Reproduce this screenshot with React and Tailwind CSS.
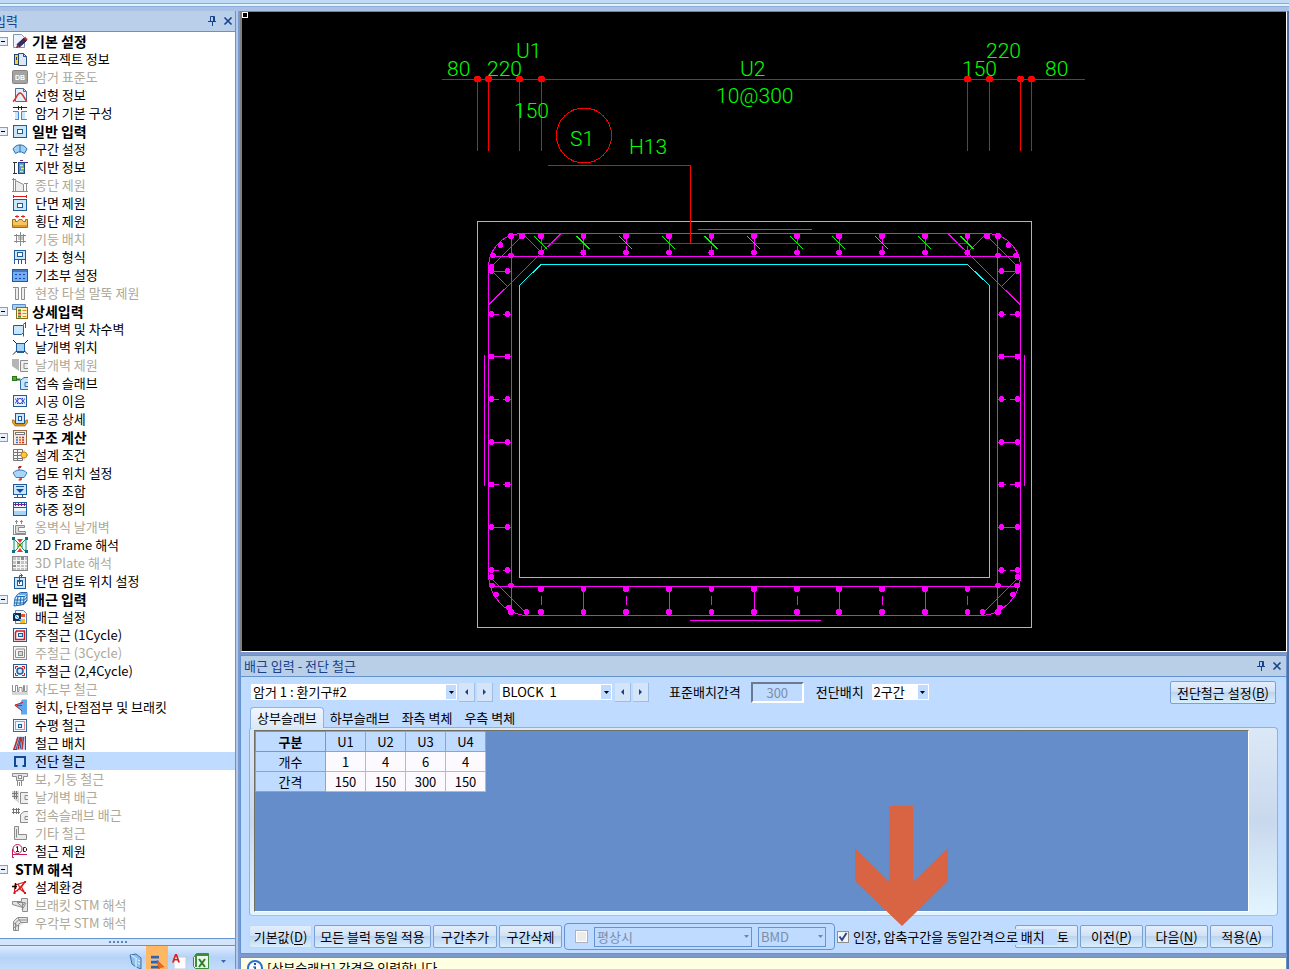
import { useState } from "react";

const BLUE = "#1f5c9c";
const SKY = "#c9e6fb";
const GRAY = "#8c8c8c";
const PALE = "#d6d6d6";

// 16x16 tree icons
const icons = {
  edit: (
    <>
      <path d="M1.500 1.500h8l3 3v10h-11z" fill="#eef3fb" stroke="#7d95b8" />
      <path d="M12 5l2.500 2.500-7 6.500-2.500-2.500z" fill="#3a2a6a" stroke="#2b1d45" />
      <path d="M12.500 4.500l2.500 2.500" stroke="#c0392b" strokeWidth="2" />
      <path d="M5 12l2 2-3 1z" fill="#8b1a1a" />
    </>
  ),
  project: (
    <>
      <path d="M6.500 2.500h5l3 3v9h-8z" fill="#dbe8f8" stroke="#31507f" />
      <path d="M11.500 2.500v3h3" fill="none" stroke="#31507f" />
      <rect x="2.500" y="3.500" width="4" height="10" fill="#ffd21f" stroke="#20406f" />
      <path d="M4.500 6v3" stroke="#20406f" />
    </>
  ),
  db: (
    <>
      <rect x="0.500" y="1.500" width="15" height="13" rx="1" fill="#a3a3a3" stroke="#858585" />
      <text x="8" y="11" textAnchor="middle" fontSize="7" fontWeight="700" fontFamily="Liberation Sans, sans-serif" fill="#fff">DB</text>
    </>
  ),
  curve: (
    <>
      <path d="M3.500 1.500h8l3 3v10h-11z" fill="#e6eefa" stroke="#4f6a94" />
      <path d="M11.500 1.500v3h3" fill="none" stroke="#4f6a94" />
      <path d="M1 14.500C4 13 5 6 8 6s4 6 7 8.500" fill="none" stroke="#d0342c" strokeWidth="1.500" />
    </>
  ),
  culvert: (
    <>
      <path d="M1 2.500h14M6.500 1v4M9.500 1v4" stroke="#222" />
      <path d="M3 7h3v8H3zM10 7h3v8h-3z" fill={SKY} />
      <path d="M1 6.500h5.500V15M15 6.500H9.500V15M3 14.500h3M15 14.500h-5" fill="none" stroke="#4b87c8" />
    </>
  ),
  box: (
    <>
      <rect x="1.500" y="2.500" width="13" height="12" fill={SKY} stroke={BLUE} />
      <rect x="5.500" y="6.500" width="5" height="4" fill="#fff" stroke={BLUE} />
    </>
  ),
  fan: (
    <>
      <path d="M1 8c3-5.500 11-5.500 14 0l-2.500 4.500-3-1.500h-3l-3 1.500z" fill="#9fd0f5" stroke="#2f6da8" />
      <path d="M8 4v7" stroke="#2f6da8" />
    </>
  ),
  ground: (
    <>
      <path d="M1 3.500h4M2.500 3.500v11M1 14.500h4" stroke="#333" />
      <rect x="6.500" y="3.500" width="6" height="11" fill="#4c95e0" stroke="#1c4a86" />
      <path d="M8 6.500h3M9 9.500h3M8 12.500h3" stroke="#ffe34d" strokeWidth="1.500" />
      <path d="M13 3.500h3M8 1.500h3" stroke="#702090" />
    </>
  ),
  profile: (
    <>
      <path d="M1.500 1v14M0 2.500h4M3.500 3.500l8 4v7h-8zM14.500 6v9M12 6.500h4M0 14.500h16" fill="#ececec" stroke={GRAY} />
    </>
  ),
  section: (
    <>
      <path d="M1 1.500h14M1.500 0v3M14.500 0v3" stroke="#e01818" />
      <rect x="1.500" y="4.500" width="13" height="11" fill={SKY} stroke={BLUE} />
      <rect x="5.500" y="8.500" width="5" height="4" fill="#fff" stroke={BLUE} />
    </>
  ),
  land: (
    <>
      <path d="M0.500 6.500h3v2h2l1.500-2h3l1.500 2h2v-2h2v8h-15z" fill="#f6c55c" stroke="#a56a12" />
      <path d="M1 12h14v2H1z" fill="#e09a28" />
      <path d="M3 3.500h4M9 3.500h4M5 2v3M11 2v3" stroke="#d22" />
    </>
  ),
  columns: (
    <path d="M2 4.500h12M2 10.500h12M4.500 3v9M8.500 1v14M11.500 3v9M6 6h5M6 8h5" stroke={GRAY} />
  ),
  footing: (
    <>
      <rect x="2.500" y="1.500" width="11" height="9" fill={SKY} stroke={BLUE} />
      <rect x="5.500" y="3.500" width="5" height="4" fill="#fff" stroke={BLUE} />
      <path d="M2.500 11v4M6.500 11v4M9.500 11v4M13.500 11v4" stroke={BLUE} />
    </>
  ),
  footingSet: (
    <>
      <rect x="0.500" y="2.500" width="15" height="12" fill="#74b0f0" stroke={BLUE} />
      <path d="M1 4h14" stroke="#12408c" />
      <path d="M3 7.500h2M7 7.500h2M11 7.500h2M3 11.500h2M7 11.500h2M11 11.500h2" stroke="#fff" strokeWidth="3" />
      <path d="M3 7.500h2M7 7.500h2M11 7.500h2M3 11.500h2M7 11.500h2M11 11.500h2" stroke="#1b40b8" strokeWidth="2" />
    </>
  ),
  piles: (
    <>
      <path d="M1 2.500h5.500v12h-3v-11M15 2.500H9.500v12h3v-11" fill="#eee" stroke={GRAY} />
    </>
  ),
  detail: (
    <>
      <path d="M0.500 1.500h13v5h-13z" fill="#a9cdf5" stroke="#5a8cc8" />
      <rect x="4.500" y="4.500" width="11" height="11" fill="#fff3b8" stroke="#8a6a1c" />
      <path d="M6 7.500h3M6 13.500h3" stroke="#2f8f2f" strokeWidth="2" />
      <path d="M10.500 7.500h4M10.500 10.500h4M10.500 13.500h4" stroke="#e08a1e" />
      <path d="M6 10.500h3" stroke="#d33" strokeWidth="2" />
    </>
  ),
  parapet: (
    <>
      <path d="M1.500 4.500h10v7l-2 2h-8z" fill={SKY} stroke={BLUE} />
      <path d="M13.500 1v6M11 3.500l3-2M11.500 11.500v4" stroke={BLUE} />
    </>
  ),
  wingPos: (
    <>
      <rect x="4.500" y="4.500" width="8" height="8" fill="#a9d6f5" stroke={BLUE} />
      <path d="M1 1l3.500 3.500M16 1l-3.500 3.500M1 15.500l3.500-3.500M16 15.500L12.500 12" stroke="#222" />
      <path d="M5 13.500h7" stroke={BLUE} />
    </>
  ),
  wing: (
    <>
      <path d="M0 2h7v12L0 9z" fill="#b5b5b5" />
      <path d="M16 3.500H8.500v11H16M16 6.500h-4v5h4" fill="#eee" stroke={GRAY} />
    </>
  ),
  approach: (
    <>
      <rect x="0.500" y="1.500" width="4" height="4" fill="#4fae2a" stroke="#2c7414" />
      <path d="M5 4.500h3.500" stroke="#2c7414" strokeWidth="2" />
      <path d="M16 2.500h-4l-3.500 3v9H16M16 7.500h-3v4h3" fill={SKY} stroke="#2f6da8" />
    </>
  ),
  joint: (
    <>
      <rect x="1.500" y="2.500" width="13" height="11" fill="#e6f3ff" stroke={BLUE} />
      <circle cx="8" cy="8" r="2.500" fill="#fff" stroke="#2233d0" />
      <path d="M3 6c2 0 2 4 0 4M13 6c-2 0-2 4 0 4M5 5l1 1M11 5l-1 1M5 11l1-1M11 11l-1-1" fill="none" stroke="#2233d0" />
    </>
  ),
  earth: (
    <>
      <path d="M0 9h2l2 4h8l2-4h2v2l-3 4H3l-3-4z" fill="#e9a42a" stroke="#9c6512" strokeWidth="0.700" />
      <rect x="3.500" y="2.500" width="9" height="10" fill={SKY} stroke={BLUE} />
      <rect x="6.500" y="5.500" width="3" height="4" fill="#fff" stroke={BLUE} />
    </>
  ),
  calc: (
    <>
      <rect x="1.500" y="1.500" width="13" height="14" fill="#fbeadb" stroke="#9a6b4a" />
      <rect x="3.500" y="3.500" width="9" height="2" fill="#fff" stroke="#777" />
      <path d="M4 8.500h2M4 11h2M4 13.500h2" stroke="#3a78d0" strokeWidth="1.500" />
      <path d="M7 8.500h2M7 11h2M7 13.500h2" stroke="#e0582a" strokeWidth="1.500" />
      <path d="M10 8.500h2M10 11h2M10 13.500h2" stroke="#c02a2a" strokeWidth="1.500" />
    </>
  ),
  condition: (
    <>
      <path d="M1.500 2.500h9v11h-9zM1.500 5.500h9M1.500 8.500h9M1.500 11.500h9M5.500 2.500v11" fill="#f7f7f7" stroke="#777" />
      <circle cx="12" cy="8" r="3" fill="#ffc83a" stroke="#c88510" />
      <path d="M12 3.500v1M12 11.500v1M7.500 8h1M15 8h1" stroke="#c88510" />
    </>
  ),
  review: (
    <>
      <path d="M1 8C4 4 12 4 15 8l-3 4.500H4z" fill="#a8d6f8" stroke="#3f7fbf" />
      <path d="M7 5V1.500h2.500M6 2.500h3M9 12v3H6.500M10 14H7" fill="none" stroke="#d81818" />
    </>
  ),
  combine: (
    <>
      <rect x="1.500" y="1.500" width="13" height="10" fill={SKY} stroke={BLUE} />
      <path d="M4 3.500h8" stroke={BLUE} />
      <path d="M4 6h8l-4 4z" fill="#1546b0" />
      <path d="M5.500 12v2M10.500 12v2M2 14.500h12" stroke={BLUE} />
    </>
  ),
  load: (
    <>
      <rect x="1.500" y="1.500" width="13" height="13" fill="#e9f5ff" stroke={BLUE} />
      <rect x="2" y="10" width="12" height="4" fill="#a5d4f8" />
      <path d="M2 3.500h12M3.500 2v3M6.500 2v3M9.500 2v3M12.500 2v3" stroke="#7a1c8a" />
      <path d="M2 6.500h12" stroke={BLUE} />
    </>
  ),
  retaining: (
    <path d="M3 2.500h3M8 2.500h3M4.500 1v4M9.500 1v4M3.500 6.500h9v2h-6v4h7v2h-10zM1.500 6v9M1 15.500h13" fill="#ddd" stroke={GRAY} />
  ),
  frame2d: (
    <>
      <path d="M2 2l4 4v5l-4 4zM14 2l-4 4v5l4 4z" fill="#e8fbf4" stroke="#108a70" />
      <path d="M5 2l3 4 3-4zM5 15l3-4 3 4z" fill="#e03a20" />
      <path d="M6 6h4v4H6z" fill="#f5c032" />
      <path d="M0 1.500h3M13 1.500h3M0 14.500h3M13 14.500h3" stroke="#0e6e86" strokeWidth="3" />
      <path d="M6 6l4 4M10 6l-4 4" stroke="#2a8f3a" />
    </>
  ),
  plate3d: (
    <>
      <rect x="0.500" y="1.500" width="15" height="14" fill="#c4c4c4" stroke={GRAY} />
      <path d="M4.500 2v13M8.500 2v13M12.500 2v13M1 5.500h14M1 9.500h14M1 12.500h14" stroke="#f5f5f5" />
      <path d="M5 6h3v3H5zM9 2h3v3H9zM1 10h3v2H1z" fill="#8f8f8f" />
    </>
  ),
  sectionPos: (
    <>
      <rect x="2.500" y="4.500" width="11" height="11" fill={SKY} stroke={BLUE} />
      <rect x="5.500" y="7.500" width="5" height="5" fill="#fff" stroke={BLUE} />
      <path d="M7.500 11V2.500h3M8.500 0.500L10.500 2.500 8.500 4.500M5.500 8.500h4" fill="none" stroke="#e01818" />
    </>
  ),
  mesh: (
    <>
      <path d="M5.500 3.500l3-2h6.500v8l-3 4-10 1.500 1-8z" fill="#d9ebfb" stroke="#1d6ab5" />
      <path d="M3 9h9.500l2.500-3M2.500 12H12l3-3M4.500 5.500h8.500l2-2M6 5l-1.500 9M9 5l-1 9M12 5l-.5 9M7 3h7" fill="none" stroke="#1d6ab5" />
    </>
  ),
  rebarSet: (
    <>
      <path d="M3.500 1.500h8l3 3v10h-11z" fill="#f2f6fc" stroke="#607fae" />
      <path d="M1 4h8v8H1z" fill="#182a50" />
      <circle cx="5" cy="8" r="2" fill="#fff" />
      <path d="M9 5h4v3H9z" fill="#e85a20" />
      <path d="M8 10h5v4H8z" fill="#f5b92c" />
      <path d="M1 4l8 8" stroke="#2e9ae0" />
    </>
  ),
  cycle1: (
    <>
      <rect x="1.500" y="1.500" width="13" height="13" fill="#eef7ff" stroke={BLUE} />
      <path d="M3.500 5.500l1-1.500h8v8.500h-9z" fill="none" stroke="#d81818" strokeWidth="1.500" />
      <rect x="6.500" y="6.500" width="4" height="3" fill={SKY} stroke={BLUE} />
    </>
  ),
  cycle3: (
    <>
      <rect x="1.500" y="1.500" width="13" height="13" fill="#f4f4f4" stroke={GRAY} />
      <path d="M3.500 5.500l1-1.500h8v8.500h-9z" fill="none" stroke={GRAY} />
      <rect x="6.500" y="6.500" width="4" height="4" fill={PALE} stroke={GRAY} />
    </>
  ),
  cycle24: (
    <>
      <rect x="1.500" y="1.500" width="13" height="13" fill="#eef7ff" stroke={BLUE} />
      <path d="M3.500 6V3.500H6M10 3.500h2.500V6M12.500 10v2.500H10M6 12.500H3.500V10" fill="none" stroke="#d81818" />
      <circle cx="8" cy="8" r="3" fill={SKY} stroke={BLUE} strokeWidth="1.500" />
      <path d="M5 5l1 1M11 5l-1 1" stroke="#d81818" />
    </>
  ),
  road: (
    <>
      <path d="M0 12.500h16" stroke={PALE} strokeWidth="3" />
      <path d="M0.500 4v6.500h3V4.500h2v6h1.500v-4h3v4h1.500v-6h1v6h2.500V4" fill="none" stroke={GRAY} />
    </>
  ),
  haunch: (
    <>
      <path d="M15 0.500v15H9V11L2 6.500 8 4l2-3.500z" fill="#5fa8ec" />
      <path d="M11 3.500L3 6l7 6M5 6.500h5" fill="none" stroke="#d81818" />
    </>
  ),
  horizontal: (
    <>
      <rect x="1.500" y="2.500" width="13" height="12" fill="#eef7ff" stroke="#2f6da8" />
      <rect x="3.500" y="4.500" width="9" height="8" fill="none" stroke="#d81818" strokeDasharray="1 1" />
      <rect x="6.500" y="7.500" width="3" height="3" fill={SKY} stroke={BLUE} />
    </>
  ),
  placing: (
    <>
      <path d="M5 1.500h9v13H1z" fill="#b9d3ee" />
      <path d="M2 14.500L6 2M6 14.500L9 2M10 14.500L11.500 2" stroke="#c22a2a" strokeWidth="1.500" />
      <path d="M4 14.500L8 2M8 14.500L10 2M13.500 15V1M1 14.500h4" stroke={BLUE} />
    </>
  ),
  shear: <path d="M2 3h12v11h-3.500v-2H12V5H4v7h1.500v2H2z" fill="#114a92" />,
  beam: (
    <>
      <path d="M0.500 2.500h15v3h-4v4h-7v-4h-4z" fill="#e4e4e4" stroke={GRAY} />
      <rect x="6.500" y="4.500" width="3" height="3" fill="#fff" stroke={GRAY} />
      <path d="M5.500 10v5M9.500 10v5M7.500 11v4" stroke={GRAY} />
    </>
  ),
  wingBar: (
    <>
      <path d="M0 2h7v12l-4-3-3-5z" fill={PALE} />
      <path d="M0 4.500h6M0 7.500h6M2.500 2v8M4.500 2v8" stroke="#777" />
      <path d="M16 3.500H8.500v11H16M16 6.500h-3v4h3" fill="#eee" stroke={GRAY} />
    </>
  ),
  approachBar: (
    <>
      <path d="M0 2.500h8M0 5.500h8M1.500 1v6M4.500 1v6M6.500 1v6" stroke="#777" />
      <path d="M16 4.500h-4l-3.500 3v8H16M16 9.500h-3v3h3" fill="#eee" stroke={GRAY} />
    </>
  ),
  etc: (
    <path d="M2.500 1.500h4v8h8v5h-12zM4.500 4v8.500" fill="#e8e8e8" stroke={GRAY} />
  ),
  spec: (
    <>
      <circle cx="5.500" cy="6" r="4.500" fill="#fff" stroke="#c2185b" />
      <path d="M0.500 6v8M0.500 11.500H15" stroke="#c2185b" />
      <path d="M4 4.500l1.500-1v5M4 8.500h3" fill="none" stroke="#222" />
      <path d="M11.500 4.500h2l1 1v2l-1 1h-2z" fill="none" stroke="#222" />
      <path d="M0 14.500h2" stroke="#2a8f3a" />
    </>
  ),
  truss: (
    <>
      <path d="M3 6l10-3-3.500 5 3 5.500-5-4-5 4zM6 5l3 6M13 3L5 12" fill="none" stroke="#d81818" strokeWidth="1.200" />
      <path d="M12 2h2v2h-2zM12 13h2v2h-2zM1.500 13h2v2h-2z" fill="#d81818" />
      <path d="M0 7.500h5M3.500 4v6" stroke="#111" strokeWidth="1.500" />
    </>
  ),
  bracketStm: (
    <path d="M15.500 1.500v13h-5v-4l-10-3v-3h9v-3zM5 5.500h8l-3 4zM10.500 6v8M14 6l-4 7" fill="#e4e4e4" stroke={GRAY} />
  ),
  cornerStm: (
    <path d="M1.500 15.500v-9l4-4h10v5h-7l-2 2v6zM3.500 15V8l3-3h9M2 8l4 3M6 3l3 4.500M1.500 13l5-3" fill="#e4e4e4" stroke={GRAY} />
  ),
};

const Icon = ({ name }) => (
  <svg viewBox="0 0 16 16" className="size-4 shrink-0" fill="none" aria-hidden="true">
    {icons[name]}
  </svg>
);

const tree = [
  {
    label: "기본 설정",
    icon: "edit",
    items: [
      ["프로젝트 정보", "project"],
      ["암거 표준도", "db", true],
      ["선형 정보", "curve"],
      ["암거 기본 구성", "culvert"],
    ],
  },
  {
    label: "일반 입력",
    icon: "box",
    items: [
      ["구간 설정", "fan"],
      ["지반 정보", "ground"],
      ["종단 제원", "profile", true],
      ["단면 제원", "section"],
      ["횡단 제원", "land"],
      ["기둥 배치", "columns", true],
      ["기초 형식", "footing"],
      ["기초부 설정", "footingSet"],
      ["현장 타설 말뚝 제원", "piles", true],
    ],
  },
  {
    label: "상세입력",
    icon: "detail",
    items: [
      ["난간벽 및 차수벽", "parapet"],
      ["날개벽 위치", "wingPos"],
      ["날개벽 제원", "wing", true],
      ["접속 슬래브", "approach"],
      ["시공 이음", "joint"],
      ["토공 상세", "earth"],
    ],
  },
  {
    label: "구조 계산",
    icon: "calc",
    items: [
      ["설계 조건", "condition"],
      ["검토 위치 설정", "review"],
      ["하중 조합", "combine"],
      ["하중 정의", "load"],
      ["옹벽식 날개벽", "retaining", true],
      ["2D Frame 해석", "frame2d"],
      ["3D Plate 해석", "plate3d", true],
      ["단면 검토 위치 설정", "sectionPos"],
    ],
  },
  {
    label: "배근 입력",
    icon: "mesh",
    items: [
      ["배근 설정", "rebarSet"],
      ["주철근 (1Cycle)", "cycle1"],
      ["주철근 (3Cycle)", "cycle3", true],
      ["주철근 (2,4Cycle)", "cycle24"],
      ["차도부 철근", "road", true],
      ["헌치, 단절점부 및 브래킷", "haunch"],
      ["수평 철근", "horizontal"],
      ["철근 배치", "placing"],
      ["전단 철근", "shear"],
      ["보, 기둥 철근", "beam", true],
      ["날개벽 배근", "wingBar", true],
      ["접속슬래브 배근", "approachBar", true],
      ["기타 철근", "etc", true],
      ["철근 제원", "spec"],
    ],
  },
  {
    label: "STM 해석",
    items: [
      ["설계환경", "truss"],
      ["브래킷 STM 해석", "bracketStm", true],
      ["우각부 STM 해석", "cornerStm", true],
    ],
  },
];

const PanelButtons = () => (
  <div className="flex gap-1.5 text-[#15428b]">
    <button aria-label="고정" className="size-2.5">
      <svg viewBox="0 0 10 10" className="size-2.5" fill="none" stroke="currentColor">
        <path d="M3.500 0.500h4v5h-4zM6.500 0.500v5M1 5.500h8M5.500 6v4" />
      </svg>
    </button>
    <button aria-label="닫기" className="size-2.5">
      <svg viewBox="0 0 10 10" className="size-2.5" fill="none" stroke="currentColor" strokeWidth="1.600">
        <path d="M1.500 1.500l7 7M8.500 1.500l-7 7" />
      </svg>
    </button>
  </div>
);

const Sidebar = () => {
  const [selected, setSelected] = useState("전단 철근");

  return (
    <aside className="flex w-59 shrink-0 flex-col overflow-hidden border-r border-[#6593cf] bg-white">
      <div className="flex h-[21px] shrink-0 items-center justify-between border-b border-[#6593cf] bg-[#b9cfea] pr-0.5 text-[#15428b]">
        <h2 className="-ml-1.5">입력</h2>
        <PanelButtons />
      </div>
      <nav className="min-h-0 flex-1 overflow-hidden">
        {tree.map((group) => (
          <div key={group.label}>
            <div className="flex h-[18px] items-center gap-1">
              <button aria-label={`${group.label} 접기`} className="flex h-[9px] w-2 items-center border border-l-0 border-[#7f9dd9] bg-[#e9f0fb]">
                <span className="ml-px h-px w-1 bg-black" />
              </button>
              {group.icon && <Icon name={group.icon} />}
              <span className={`text-sm leading-4 font-bold ${group.icon ? "" : "pl-[3px]"}`}>{group.label}</span>
            </div>
            {group.items.map(([label, icon, disabled]) => (
              <button
                key={label}
                disabled={disabled}
                onClick={() => setSelected(label)}
                className={`flex h-[18px] w-full items-center gap-[7px] pl-3 text-left leading-[18px] ${
                  selected === label ? "bg-[#bfdbff]" : ""
                } ${disabled ? "text-[#aca899]" : "text-black"}`}
              >
                <Icon name={icon} />
                {label}
              </button>
            ))}
          </div>
        ))}
      </nav>
      <div className="flex h-2 shrink-0 items-center justify-center gap-0.5 border-y border-[#6593cf] bg-[#d3e5fb]">
        {[0, 1, 2, 3, 4].map((i) => (
          <span key={i} className="size-0.5 bg-[#5b86c4]" />
        ))}
      </div>
      <div className="flex h-[23px] shrink-0 items-start justify-end overflow-hidden bg-linear-to-b from-[#dcebfd] via-[#b5d2f8] to-[#c4dcfb]">
        <button aria-label="문서" className="pt-[7px] pr-[3px]">
          <svg viewBox="0 0 16 16" className="size-4" fill="none">
            <path d="M3 2l6-1 5 4v11l-5-2-4-3z" fill="#8fc1ee" stroke="#3b6ea8" />
            <path d="M9 6v9M11 7l2 1M11 10l2 1M4 2l6 4" stroke="#eaf4ff" />
          </svg>
        </button>
        <button aria-label="입력" className="h-6 bg-[#fdb765] px-[3px] pt-[7px]">
          <svg viewBox="0 0 16 16" className="size-4" fill="none">
            <path d="M2 1.500h8M2 6.500h8M2 11.500h8" stroke="#fff" />
            <path d="M2 3h8M2 8h8M2 13h8" stroke="#2c65ae" strokeWidth="3" />
            <path d="M8 6l7 7-4 .5-1 3z" fill="#f0641e" stroke="#c8480c" strokeWidth="0.500" />
          </svg>
        </button>
        <button aria-label="도면" className="px-[3px] pt-[7px]">
          <svg viewBox="0 0 16 16" className="size-4" fill="none">
            <path d="M3 4h12v12H3z" fill="#fff" stroke="#c4ccd8" />
            <path d="M1 9.500L4 1h2l3 8.500H7L6.500 7.500h-3L3 9.500zM4 6h2L5 3z" fill="#d81e1e" />
          </svg>
        </button>
        <button aria-label="엑셀" className="px-[3px] pt-[7px]">
          <svg viewBox="0 0 16 16" className="size-4" fill="none">
            <path d="M3.500 0.500h12v15h-13l-2-2v-9z" fill="#eaf6e6" stroke="#3c8d3c" />
            <path d="M3 1v13M3 2h12" stroke="#3c8d3c" strokeWidth="2" />
            <path d="M6 6l6 8M12 6l-6 8" stroke="#2b7d2b" strokeWidth="2" />
          </svg>
        </button>
        <button aria-label="더 보기" className="px-[9px] pt-3.5">
          <svg viewBox="0 0 5 3" className="h-[3px] w-[5px]" fill="#3b66a8">
            <path d="M0 0h5L2.500 3z" />
          </svg>
        </button>
      </div>
    </aside>
  );
};

/* ---- drawing ---- */

const barX = [541, 583.5, 626, 669, 711.5, 754, 797, 839, 882, 925, 967.5];
const barY = [271, 314, 356.5, 399, 442, 484.5, 527, 570];
const cornerDots = [
  [511, 236], [522, 236], [500.5, 245], [493, 255.5], [511, 255.5], [491.5, 267],
  [491.5, 577], [492, 585.5], [511, 585.5], [496, 594.5], [509, 607.5], [511, 612], [526.5, 612],
];

const dims = [
  ["80", 447, 76], ["220", 487, 76], ["U1", 516, 58], ["150", 514, 118], ["S1", 570, 146],
  ["H13", 629, 154], ["U2", 740, 76], ["10@300", 716, 103], ["150", 962, 76], ["220", 986, 58], ["80", 1045, 76],
];

const HalfSection = () => (
  <g>
    <path d="M488.500 266C489 250 502 234 521 233.500M488.500 577C490 596 504 613 525 615.500" />
    <path d="M488.500 266V577M511.500 236V612" />
    <path d="M490 268l34-34M488.500 305l72-71M525 236l16 16M492 271l16 16M492 579l33 33" />
    <path d="M484.500 355V486" />
    {barY.map((y, i) => (
      <g key={y}>
        <path d={i % 2 ? `M491 ${y}h8M503 ${y}h8` : `M491 ${y}h20`} />
        <circle cx="491.500" cy={y} r="3" fill="#f0f" stroke="none" />
        <circle cx="507.500" cy={y} r="3" fill="#f0f" stroke="none" />
      </g>
    ))}
    {cornerDots.map(([x, y]) => (
      <circle key={`${x}-${y}`} cx={x} cy={y} r="3" fill="#f0f" stroke="none" />
    ))}
  </g>
);

const Drawing = () => (
  <svg viewBox="242 12 1044 639" className="h-full w-full" fill="none" strokeWidth="1" shapeRendering="crispEdges">
    <rect x="242.500" y="12.500" width="5" height="5" stroke="#fff" />

    {/* concrete outline */}
    <g stroke="#0ff">
      <rect x="477.500" y="221.500" width="554" height="406" />
      <path d="M541 264.500H967.500L989.500 285.500V577.500H519.500V285.500z" />
    </g>

    {/* main bars */}
    <g stroke="#f0f">
      <HalfSection />
      <g transform="translate(1509 0) scale(-1 1)">
        <HalfSection />
      </g>
      <path d="M521 233.500H988M491 256.500H1018M491 586.500H1018M525 615.500H984M698 229.500H812M690 620.500H821" />
      {barX.map((x, i) => (
        <g key={x}>
          <path d={i % 2 ? `M${x} 236V252M${x} 589V612` : `M${x} 236v7M${x} 246v6M${x} 596v9`} />
          {[236, 252.5, 589, 612].map((y) => (
            <circle key={y} cx={x} cy={y} r="3" fill="#f0f" stroke="none" />
          ))}
        </g>
      ))}
    </g>

    {/* dimension lines and leader */}
    <g stroke="#f00">
      <path d="M442 79.500H1085" />
      {[477.5, 488.5, 519.5, 541.5, 967.5, 989.5, 1020.5, 1031.5].map((x) => (
        <g key={x}>
          <path d={`M${x} 79V151`} />
          <circle cx={x} cy="79" r="3" fill="#f00" />
        </g>
      ))}
      <circle cx="584" cy="135.500" r="27.500" />
      <path d="M548 165.500H690.500V243M541 243.500H967" />
    </g>
    <g stroke="#0f0">
      {barX.map((x) => (
        <path key={x} d={`M${x - 7} 236l13 13`} />
      ))}
    </g>
    <g fill="#0f0" stroke="none" className="font-['Roboto',sans-serif] text-[21px] font-light">
      {dims.map(([text, x, y]) => (
        <text key={`${x}-${y}`} x={x} y={y}>{text}</text>
      ))}
    </g>
  </svg>
);

/* ---- lower panel ---- */

const Select = ({ label, value, disabled, className }) => (
  <div className={`relative flex ${className}`}>
    <select
      aria-label={label}
      disabled={disabled}
      className={`h-full w-full appearance-none px-0.5 leading-4 outline-none ${
        disabled ? "border border-[#6593cf] bg-[#bfdbff] text-[#7b8ea8]" : "bg-white text-black"
      }`}
    >
      <option>{value}</option>
    </select>
    <span className="pointer-events-none absolute inset-y-px right-px flex w-2.5 items-center justify-center bg-[#bfdbff]">
      <svg viewBox="0 0 5 3" className="h-[3px] w-[5px]" fill={disabled ? "#5f8ac6" : "#000"}>
        <path d="M0 0h5L2.500 3z" />
      </svg>
    </span>
  </div>
);

const Stepper = () => (
  <div className="flex gap-0.5">
    {["이전 항목", "다음 항목"].map((label, i) => (
      <button key={label} aria-label={label} className="flex h-[19px] w-4 items-center justify-center border-r border-b border-[#9dbde6] bg-[#d4e5fa]">
        <svg viewBox="0 0 3 6" className="h-1.5 w-[3px]" fill="#15428b">
          <path d={i ? "M0 0v6l3-3z" : "M3 0v6L0 3z"} />
        </svg>
      </button>
    ))}
  </div>
);

const Button = ({ children, hotkey, className = "" }) => (
  <button
    className={`h-[23px] shrink-0 rounded-xs border bg-[linear-gradient(#e3eefb_0%,#d2e2f6_45%,#bdd4f0_50%,#d8effd_100%)] leading-[21px] whitespace-nowrap text-black ${
      className.includes("border-") ? "" : "border-[#7ba0d4]"
    } ${className}`}
  >
    {children}
    {hotkey && (
      <>
        (<u className="underline-offset-2">{hotkey}</u>)
      </>
    )}
  </button>
);

const tabs = ["상부슬래브", "하부슬래브", "좌측 벽체", "우측 벽체"];
const columns = ["U1", "U2", "U3", "U4"];
const rows = [
  { name: "개수", values: [1, 4, 6, 4] },
  { name: "간격", values: [150, 150, 300, 150] },
];

const SpacingTable = () => (
  <table className="table-fixed border-collapse text-center leading-[18px]">
    <thead>
      <tr className="h-5 bg-[#bfdbff]">
        <th className="w-[70px] border border-[#7c96c2] p-0 font-bold">구분</th>
        {columns.map((c) => (
          <th key={c} className="w-10 border border-[#8fa3c8] p-0 font-normal">{c}</th>
        ))}
      </tr>
    </thead>
    <tbody>
      {rows.map((r) => (
        <tr key={r.name} className="h-5 bg-[#fdfaff]">
          <th className="border border-[#8fa3c8] bg-[#bfdbff] p-0 font-normal">{r.name}</th>
          {r.values.map((v, i) => (
            <td key={i} className="border border-[#b9b9bd] p-0">{v}</td>
          ))}
        </tr>
      ))}
    </tbody>
  </table>
);

const ShearPanel = () => {
  const [tab, setTab] = useState("상부슬래브");
  const [evenSpacing, setEvenSpacing] = useState(true);

  return (
    <section className="my-[3px] flex h-[299px] shrink-0 flex-col border border-[#6593cf] bg-[#bfdbff]">
      <div className="flex h-[21px] shrink-0 items-center justify-between border-b border-[#6593cf] bg-[#b9cfe8] pr-1 pl-[3px] text-[#15428b]">
        <h2>배근 입력 - 전단 철근</h2>
        <PanelButtons />
      </div>

      <div className="flex h-[30px] shrink-0 items-center pr-2.5 pl-2.5">
        <Select label="암거" value="암거 1 : 환기구#2" className="h-4 w-[206px]" />
        <div className="ml-0.5"><Stepper /></div>
        <Select label="블럭" value={"BLOCK\u00a0 1"} className="ml-[7px] h-4 w-28" />
        <div className="ml-[3px]"><Stepper /></div>
        <label htmlFor="std" className="ml-5">표준배치간격</label>
        <input
          id="std"
          disabled
          defaultValue="300"
          className="ml-2.5 h-[21px] w-[53px] border-2 border-t-[#6b7a90] border-r-white border-b-white border-l-[#6b7a90] bg-[#bfdbff] text-center text-[#7b8ea8]"
        />
        <span className="ml-3">전단배치</span>
        <Select label="전단배치" value="2구간" className="ml-2 h-4 w-[57px]" />
        <Button hotkey="B" className="ml-auto px-1.5">전단철근 설정</Button>
      </div>

      <div role="tablist" className="relative z-10 -mb-px flex h-[21px] shrink-0 pl-[9px]">
        {tabs.map((t) => (
          <button
            key={t}
            role="tab"
            aria-selected={tab === t}
            onClick={() => setTab(t)}
            className={`h-[21px] rounded-t px-1.5 leading-4 ${
              tab === t ? "border border-b-0 border-[#8db2e3] bg-linear-to-b from-[#eef6ff] to-[#dbe8f6]" : ""
            }`}
          >
            {t}
          </button>
        ))}
      </div>

      <div className="mr-2 ml-2 flex min-h-0 flex-1 rounded-sm border border-[#8db2e3] border-b-[#9cc4ee] bg-linear-to-b from-[#dbe8f6] via-[#c9d9ed] to-[#e2f5ff] pt-0.5 pb-[3px] pl-1">
        <div className="flex-1 border border-t-[#716f64] border-r-white border-b-white border-l-[#716f64] bg-[#648dc9]">
          <SpacingTable />
        </div>
        <div className="w-7 shrink-0" />
      </div>

      <div className="flex h-[37px] shrink-0 items-center gap-0.5 pt-1 pr-[13px] pl-2">
        <Button hotkey="D" className="w-[63px] border-[#e8d68c]">기본값</Button>
        <Button className="w-[117px]">모든 블럭 동일 적용</Button>
        <Button className="w-16">구간추가</Button>
        <Button className="w-[63px]">구간삭제</Button>
        <div className="flex h-[27px] w-[271px] shrink-0 items-center rounded border border-[#6593cf] pl-2.5">
          <input type="checkbox" disabled aria-label="하중 상태 사용" className="size-[13px] appearance-none border border-[#a9b3c0] bg-[#ececec] shadow-[inset_0_0_0_1px_#fff]" />
          <Select label="하중 상태" value="평상시" disabled className="ml-1.5 h-5 w-[158px]" />
          <Select label="부재력" value="BMD" disabled className="ml-1.5 h-5 w-[68px]" />
        </div>
        <label className="relative z-10 flex h-4 shrink-0 items-center gap-1 bg-[#bfdbff] pr-3 whitespace-nowrap">
          <input
            type="checkbox"
            checked={evenSpacing}
            onChange={(e) => setEvenSpacing(e.target.checked)}
            className="peer size-3 appearance-none border border-[#8e8f8f] bg-[#f4f4f4]"
          />
          <svg viewBox="0 0 12 12" className="pointer-events-none absolute left-0 hidden size-3 peer-checked:block" fill="none" stroke="#2c4a8c" strokeWidth="2">
            <path d="M2.500 5.500l2.500 3.500 4.500-7" />
          </svg>
          인장, 압축구간을 동일간격으로 배치
        </label>
        <div className="-ml-12 flex flex-1 justify-end gap-0.5">
          <Button className="w-[63px] pr-2 text-right">토</Button>
          <Button hotkey="P" className="w-[63px]">이전</Button>
          <Button hotkey="N" className="w-[63px]">다음</Button>
          <Button hotkey="A" className="w-[63px]">적용</Button>
        </div>
      </div>
    </section>
  );
};

const App = () => {
  return (
    <div className="flex h-screen flex-col overflow-hidden bg-[#7b9acb] font-['Noto_Sans_CJK_KR',sans-serif] text-[13px] text-black">
      <div className="h-[11px] shrink-0 bg-[#a9c1e2]">
        <div className="h-1 border-b border-[#8aabdb] bg-[#bfdbf5]" />
        <div className="h-[3px] border-b border-[#8aabdb] bg-[#e3f3fd]" />
      </div>

      <div className="flex min-h-0 flex-1">
        <Sidebar />
        <div className="w-1 shrink-0 border-l-2 border-[#b0c9ea] bg-[#7b9acb]" />

        <main className="flex min-w-0 flex-1 flex-col border-r-2 border-[#4f6fa3]">
          <div className="min-h-0 flex-1 border border-l-2 border-t-[#808080] border-r-white border-b-white border-l-[#808080] bg-black">
            <Drawing />
          </div>
          <ShearPanel />

          <div className="flex h-3 shrink-0 items-start gap-1 overflow-hidden border border-b-0 border-[#6593cf] bg-[#ffffe1] pl-1.5">
            <svg viewBox="0 0 16 16" className="mt-0.5 size-4 shrink-0">
              <circle cx="8" cy="8" r="7" fill="#fff" stroke="#2a6fd6" strokeWidth="2" />
              <path d="M7 3h2v2H7zM6 6.500h3V12h1.500v1H6v-1h1.300V7.500H6z" fill="#1d4fb0" />
            </svg>
            <span>[상부슬래브] 간격을 입력합니다.</span>
          </div>
        </main>
      </div>

      {/* callout arrow over the panel */}
      <svg viewBox="0 0 93 120" className="pointer-events-none absolute right-[341px] bottom-[43px] z-20 h-[120px] w-[93px]" fill="#d96444">
        <path d="M34.500 0H58v76l35-34v33L47 120 0 75V42l34.500 34z" />
      </svg>
    </div>
  );
};

export default App;
